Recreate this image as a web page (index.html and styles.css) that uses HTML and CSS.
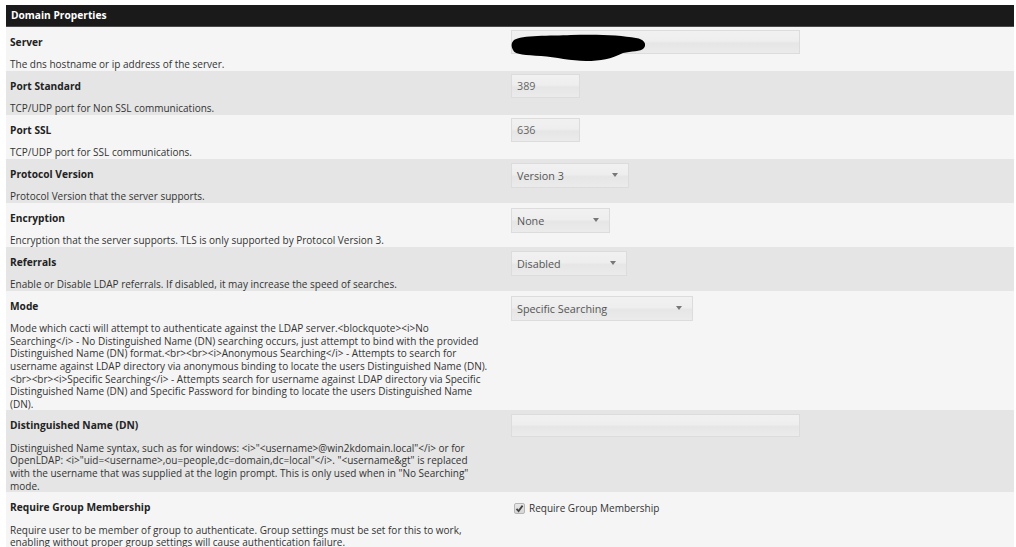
FILE: index.html
```html
<!DOCTYPE html>
<html>
<head>
    <meta charset="utf-8"/>
    <title>LDAP Settings</title>
    <link rel="stylesheet" href="styles.css">
</head>
<body>
<div id="topGap"></div>
<div id="formTable">
    <div class="formHeader">Domain Properties</div>

    <div class="formRow odd">
        <div class="formColumn">
            <div class="formFieldName">Server</div>
            <div class="formFieldDescription">The dns hostname or ip address of the server.</div>
        </div>
        <div class="formColumn formValue">
            <span class="textBox tbWide">
                <svg class="scribble" width="140" height="32" viewBox="0 0 140 32">
                    <path d="M3,8 C10,3 40,4 60,3 C85,2 110,3 125,6 C133,7 136,12 133,16 C130,20 120,19 112,21 C100,27 90,29 75,29 C60,29 45,25 30,24 C15,23 4,23 2,18 C0,14 0,11 3,8 Z" fill="#000"/>
                </svg>
            </span>
        </div>
    </div>

    <div class="formRow even">
        <div class="formColumn">
            <div class="formFieldName">Port Standard</div>
            <div class="formFieldDescription">TCP/UDP port for Non SSL communications.</div>
        </div>
        <div class="formColumn formValue">
            <span class="textBox tbPort">389</span>
        </div>
    </div>

    <div class="formRow odd">
        <div class="formColumn">
            <div class="formFieldName">Port SSL</div>
            <div class="formFieldDescription">TCP/UDP port for SSL communications.</div>
        </div>
        <div class="formColumn formValue">
            <span class="textBox tbPort">636</span>
        </div>
    </div>

    <div class="formRow even">
        <div class="formColumn">
            <div class="formFieldName">Protocol Version</div>
            <div class="formFieldDescription">Protocol Version that the server supports.</div>
        </div>
        <div class="formColumn formValue">
            <span class="selectBox selVersion"><span>Version 3</span><span class="arrow"></span></span>
        </div>
    </div>

    <div class="formRow odd">
        <div class="formColumn">
            <div class="formFieldName">Encryption</div>
            <div class="formFieldDescription">Encryption that the server supports. TLS is only supported by Protocol Version 3.</div>
        </div>
        <div class="formColumn formValue">
            <span class="selectBox selEncryption"><span>None</span><span class="arrow"></span></span>
        </div>
    </div>

    <div class="formRow even">
        <div class="formColumn">
            <div class="formFieldName">Referrals</div>
            <div class="formFieldDescription">Enable or Disable LDAP referrals. If disabled, it may increase the speed of searches.</div>
        </div>
        <div class="formColumn formValue">
            <span class="selectBox selReferrals"><span>Disabled</span><span class="arrow"></span></span>
        </div>
    </div>

    <div class="formRow odd">
        <div class="formColumn">
            <div class="formFieldName">Mode</div>
            <div class="formFieldDescription">Mode which cacti will attempt to authenticate against the LDAP server.&lt;blockquote&gt;&lt;i&gt;No<br>
                Searching&lt;/i&gt; - No Distinguished Name (DN) searching occurs, just attempt to bind with the provided<br>
                Distinguished Name (DN) format.&lt;br&gt;&lt;br&gt;&lt;i&gt;Anonymous Searching&lt;/i&gt; - Attempts to search for<br>
                username against LDAP directory via anonymous binding to locate the users Distinguished Name (DN).<br>
                &lt;br&gt;&lt;br&gt;&lt;i&gt;Specific Searching&lt;/i&gt; - Attempts search for username against LDAP directory via Specific<br>
                Distinguished Name (DN) and Specific Password for binding to locate the users Distinguished Name<br>
                (DN).</div>
        </div>
        <div class="formColumn formValue">
            <span class="selectBox selMode"><span>Specific Searching</span><span class="arrow"></span></span>
        </div>
    </div>

    <div class="formRow even">
        <div class="formColumn">
            <div class="formFieldName">Distinguished Name (DN)</div>
            <div class="formFieldDescription">Distinguished Name syntax, such as for windows: &lt;i&gt;"&lt;username&gt;@win2kdomain.local"&lt;/i&gt; or for<br>
                OpenLDAP: &lt;i&gt;"uid=&lt;username&gt;,ou=people,dc=domain,dc=local"&lt;/i&gt;. "&lt;username&amp;gt" is replaced<br>
                with the username that was supplied at the login prompt. This is only used when in "No Searching"<br>
                mode.</div>
        </div>
        <div class="formColumn formValue">
            <span class="textBox tbWide tbDn"></span>
        </div>
    </div>

    <div class="formRow odd">
        <div class="formColumn">
            <div class="formFieldName">Require Group Membership</div>
            <div class="formFieldDescription">Require user to be member of group to authenticate. Group settings must be set for this to work,<br>
                enabling without proper group settings will cause authentication failure.</div>
        </div>
        <div class="formColumn formValue checkValue">
            <span class="checkBox">
                <svg width="9" height="9" viewBox="0 0 9 9"><path d="M1.5,4.8 L3.6,7 L7.6,1.6" fill="none" stroke="#444" stroke-width="1.8"/></svg>
            </span>
            <span class="checkLabel">Require Group Membership</span>
        </div>
    </div>
</div>
</body>
</html>
```

FILE: styles.css
```css
*{
    box-sizing: border-box;
}

body{
    margin: 0 2px 0 6px;
    background: #fff;
    font-family: "Open Sans", "Noto Sans", sans-serif;
    font-size: 10px;
    color: #333;
}

#topGap{
    height: 5px;
}

.formHeader{
    height: 22px;
    line-height: 21px;
    padding-left: 5px;
    background: #1a1a1a;
    border-bottom: 1px solid #4a4a4a;
    color: #fff;
    font-size: 10.2px;
    font-weight: bold;
}

.formRow{
    display: grid;
    grid-template-columns: 505px 1fr;
}

.formRow.odd{
    background: #f5f5f5;
}

.formRow.even{
    background: #e5e5e5;
}

.formColumn{
    padding: 0 4px 0 4px;
}

.formFieldName{
    padding-top: 7px;
    line-height: 17px;
    font-size: 10.2px;
    font-weight: bold;
    color: #222;
}

.formFieldDescription{
    margin-top: 7.4px;
    line-height: 12.6px;
    white-space: nowrap;
    color: #333;
}

.formValue{
    padding: 3px 0 0 0;
}

.textBox, .selectBox{
    position: relative;
    display: flex;
    align-items: center;
    height: 24px;
    padding-left: 5px;
    border: 1px solid #dcdcdc;
    background: linear-gradient(#f1f1f1 0%, #eeeeee 45%, #e6e6e6 55%, #ebebeb 100%);
    color: #666;
    font-size: 10.8px;
}

.tbWide{
    width: 289px;
}

.tbPort{
    width: 69px;
}

.tbDn{
    margin-top: 1px;
    height: 23px;
}

.scribble{
    position: absolute;
    left: -1px;
    top: 1px;
    overflow: visible;
}

.selectBox{
    justify-content: space-between;
    margin-top: 1px;
    height: 25px;
    padding-right: 10px;
    color: #555;
}

.formRow.odd .selectBox{
    margin-top: 2px;
}

.selectBox .arrow{
    width: 0;
    height: 0;
    border-left: 3.5px solid transparent;
    border-right: 3.5px solid transparent;
    border-top: 4px solid #777;
}

.selVersion{ width: 118px; }
.selEncryption{ width: 99px; }
.selReferrals{ width: 116px; }
.selMode{ width: 182px; }

.checkValue{
    display: flex;
    align-items: center;
    align-self: start;
    padding-top: 9px;
    padding-left: 3px;
}

.checkBox{
    display: flex;
    align-items: center;
    justify-content: center;
    width: 11px;
    height: 11px;
    border: 1px solid #b5b5b5;
    border-radius: 2px;
    background: linear-gradient(#e8e8e8, #d6d6d6);
}

.checkLabel{
    margin-left: 4px;
    line-height: 14px;
    font-size: 10px;
    color: #333;
}
```
